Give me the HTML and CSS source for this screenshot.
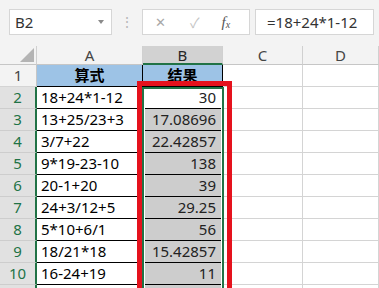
FILE: index.html
```html
<!DOCTYPE html>
<html lang="zh-CN">
<head>
    <meta charset="UTF-8">
    <title>算式 - 结果</title>
    <link rel="stylesheet" href="styles.css">
</head>
<body>
    <div class="toolbar">
        <div class="name-box">
            <span>B2</span>
            <span class="arrow"></span>
        </div>
        <div class="grip">⋮</div>
        <div class="fn-box">
            <span class="cancel">✕</span>
            <span class="enter">✓</span>
            <span class="fx">f<sub>x</sub></span>
        </div>
        <div class="formula">=18+24*1-12</div>
    </div>

    <div class="sheet">
        <div class="grid">
            <div class="hd corner"><span class="tri"></span></div>
            <div class="hd">A</div>
            <div class="hd sel">B</div>
            <div class="hd">C</div>
            <div class="hd">D</div>

            <div class="rh">1</div>
            <div class="c b head">算式</div>
            <div class="c b head">结果</div>
            <div class="c"></div>
            <div class="c"></div>
        </div>
        <div class="grid" id="rows"></div>

        <!-- selection outline + red mark -->
        <div class="sel-box"></div>
        <div class="red-box"></div>
    </div>

    <script>
        const data = [
            ['18+24*1-12', '30'],
            ['13+25/23+3', '17.08696'],
            ['3/7+22', '22.42857'],
            ['9*19-23-10', '138'],
            ['20-1+20', '39'],
            ['24+3/12+5', '29.25'],
            ['5*10+6/1', '56'],
            ['18/21*18', '15.42857'],
            ['16-24+19', '11']
        ];

        let html = '';
        data.forEach((row, i) => {
            const active = i === 0 ? ' active' : '';
            html += `<div class="rh on">${i + 2}</div>
                <div class="c b">${row[0]}</div>
                <div class="c b num${active}">${row[1]}</div>
                <div class="c"></div>
                <div class="c"></div>`;
        });
        // row 11 is only a sliver at the bottom edge
        html += `<div class="rh on"></div><div class="c"></div><div class="c num"></div><div class="c"></div><div class="c"></div>`;
        document.getElementById('rows').innerHTML = html;
    </script>
</body>
</html>
```

FILE: styles.css
```css
body {
    margin: 0;
    font-family: "Noto Sans", "Noto Sans CJK SC", sans-serif;
    background: #fff;
    overflow: hidden;
}
.toolbar {
    height: 46px;
    background: #f3f3f3;
    display: flex;
    align-items: flex-start;
    padding: 9px 0 0 9px;
    box-sizing: border-box;
}
.name-box {
    width: 103px;
    height: 26px;
    box-sizing: border-box;
    background: #fff;
    border: 1px solid #d6d6d6;
    display: flex;
    align-items: center;
    justify-content: space-between;
    padding: 0 7px 0 5px;
    font-size: 15px;
    color: #333;
}
.arrow {
    width: 0;
    height: 0;
    border-left: 3px solid transparent;
    border-right: 3px solid transparent;
    border-top: 4px solid #8a8a8a;
}
.grip {
    width: 30px;
    text-align: center;
    color: #b8b8b8;
    font-size: 14px;
    line-height: 26px;
}
.fn-box {
    width: 108px;
    height: 26px;
    box-sizing: border-box;
    background: #fff;
    border: 1px solid #d6d6d6;
    display: flex;
    align-items: center;
    position: relative;
    font-size: 14px;
}
.cancel {
    color: #a8a8a8;
    margin-left: 12px;
    font-size: 13px;
}
.enter {
    color: #c4c4c4;
    margin-left: 24px;
    font-size: 14px;
}
.fx {
    margin-left: 22px;
    font-family: "Liberation Serif", serif;
    font-style: italic;
    color: #555;
    font-size: 15px;
}
.fx sub {
    font-size: 10px;
    vertical-align: -1px;
}
.formula {
    margin-left: 5px;
    width: 119px;
    height: 26px;
    box-sizing: border-box;
    background: #fff;
    border: 1px solid #d6d6d6;
    padding-left: 11px;
    font-size: 15px;
    line-height: 24px;
    color: #333;
    white-space: nowrap;
}
.sheet {
    position: relative;
}
.grid {
    display: grid;
    grid-template-columns: 37px 106px 80px 80px 1fr;
    grid-auto-rows: 22px;
}
.grid > div {
    box-sizing: border-box;
    border-right: 1px solid #d4d4d4;
    border-bottom: 1px solid #d4d4d4;
}
.grid:first-child {
    grid-template-rows: 19px 22px;
}
.hd {
    background: #f3f3f3;
    text-align: center;
    font-size: 15px;
    line-height: 18px;
    color: #444;
    border-bottom-color: #c6c6c6 !important;
    border-right-color: #d0d0d0 !important;
}
.hd.sel {
    background: #d2d2d2;
    color: #262626;
    border-bottom: 2px solid #217346 !important;
}
.corner {
    position: relative;
}
.tri {
    position: absolute;
    right: 2px;
    bottom: 2px;
    width: 0;
    height: 0;
    border-left: 14px solid transparent;
    border-bottom: 14px solid #b4b4b4;
}
.rh {
    background: #f3f3f3;
    text-align: center;
    font-size: 15px;
    line-height: 21px;
    color: #444;
    border-right-color: #c6c6c6 !important;
}
.rh.on {
    background: #e1e1e1;
    color: #217346;
    border-right: 2px solid #217346 !important;
    border-bottom-color: #cdcdcd !important;
}
.c {
    font-size: 15px;
    line-height: 21px;
    padding: 0 4px;
    color: #000;
    white-space: nowrap;
}
.c.b {
    border-right: 1px solid #000;
    border-bottom: 1px solid #000;
}
.head {
    background: #9dc3e6;
    font-weight: bold;
    text-align: center;
}
.num {
    background: #cdcdcd;
    text-align: right;
    padding-right: 6px;
    color: #222;
}
.num.active {
    background: #fff;
}
.sel-box {
    position: absolute;
    left: 142px;
    top: 41px;
    width: 82px;
    height: 260px;
    border: 2px solid #217346;
    box-sizing: border-box;
    box-shadow: inset 0 0 0 1px #fff;
}
.red-box {
    position: absolute;
    left: 137px;
    top: 35px;
    width: 95px;
    height: 270px;
    border: 5px solid #e5121d;
    box-sizing: border-box;
}
```
